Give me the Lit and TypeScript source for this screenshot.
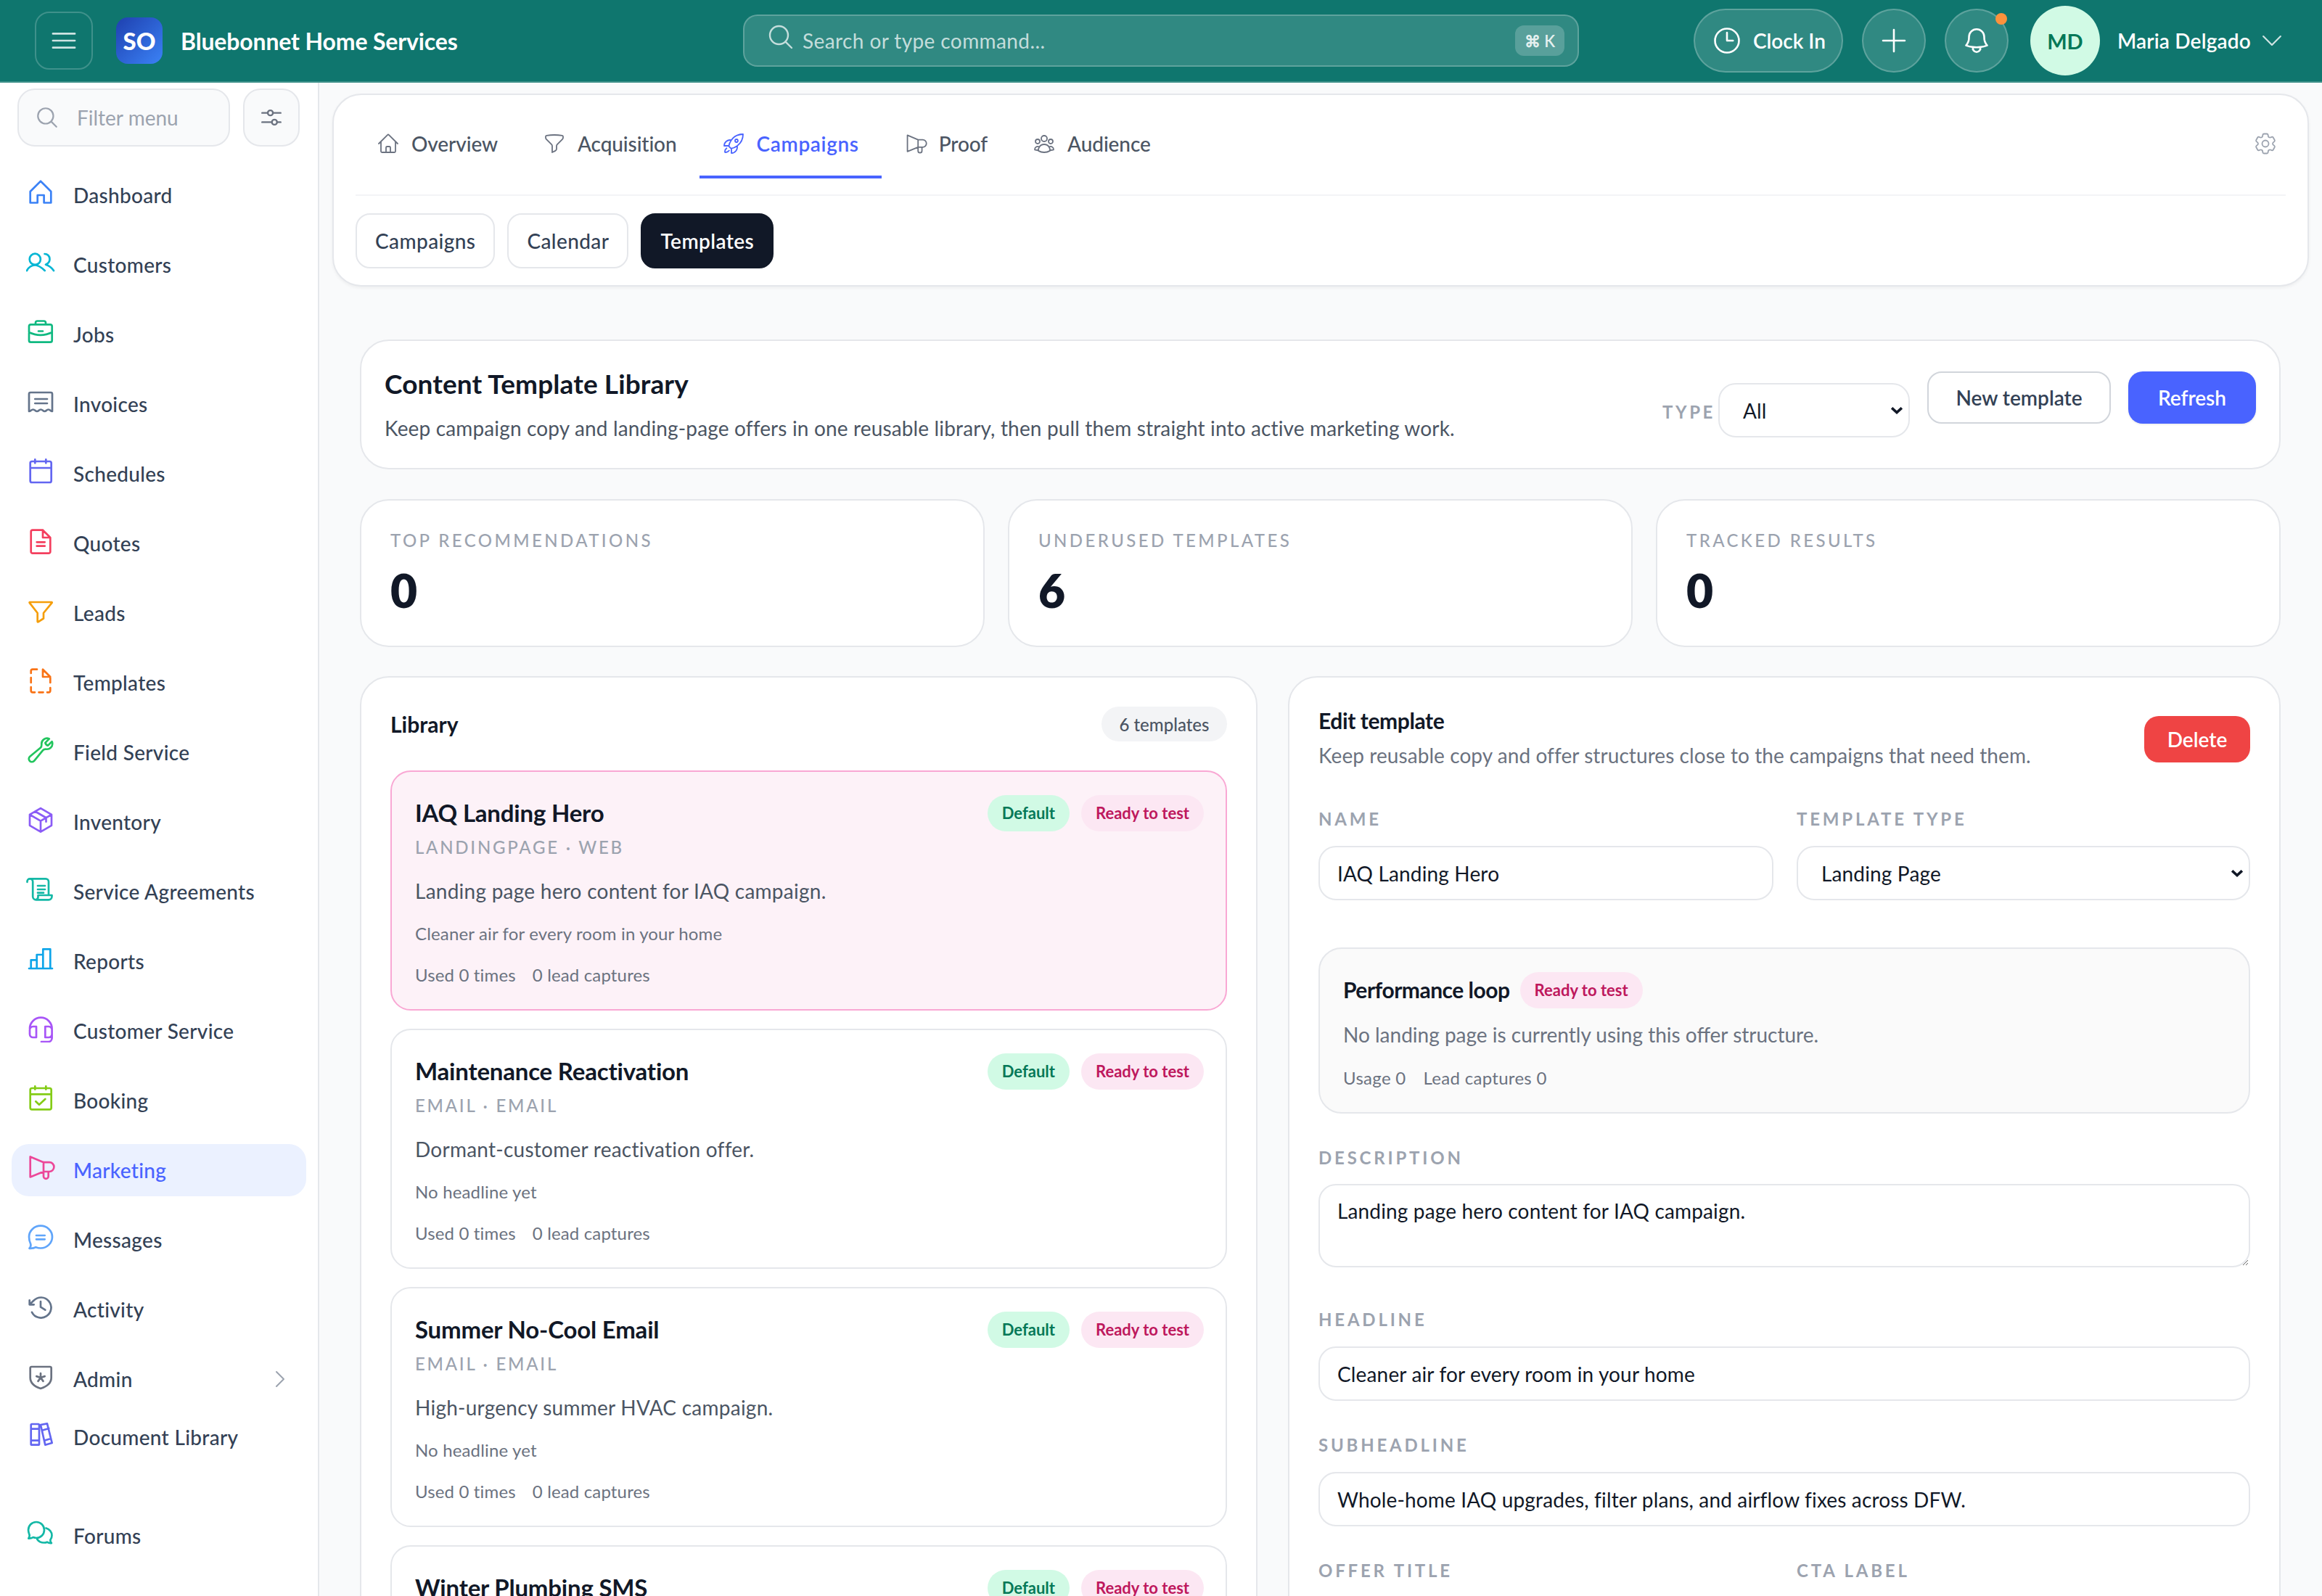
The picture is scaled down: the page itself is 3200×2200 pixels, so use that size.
import { LitElement, html, css } from 'lit';
import { customElement } from 'lit/decorators.js';

// heroicon-style paths, drawn on a 24 box
const H = {
  home: 'm2.25 12 8.954-8.955c.44-.439 1.152-.439 1.591 0L21.75 12M4.5 9.75v10.125c0 .621.504 1.125 1.125 1.125H9.75v-4.875c0-.621.504-1.125 1.125-1.125h2.25c.621 0 1.125.504 1.125 1.125V21h4.125c.621 0 1.125-.504 1.125-1.125V9.75M8.25 21h8.25',
  funnel: 'M12 3c2.755 0 5.455.232 8.083.678.533.09.917.556.917 1.096v1.044a2.25 2.25 0 0 1-.659 1.591l-5.432 5.432a2.25 2.25 0 0 0-.659 1.591v2.927a2.25 2.25 0 0 1-1.244 2.013L9.75 21v-6.568a2.25 2.25 0 0 0-.659-1.591L3.659 7.409A2.25 2.25 0 0 1 3 5.818V4.774c0-.54.384-1.006.917-1.096A48.32 48.32 0 0 1 12 3Z',
  wrench: 'M21.75 6.75a4.5 4.5 0 0 1-4.884 4.484c-1.076-.091-2.264.071-2.95.904l-7.152 8.684a2.548 2.548 0 1 1-3.586-3.586l8.684-7.152c.833-.686.995-1.874.904-2.95a4.5 4.5 0 0 1 6.336-4.486l-3.276 3.276a3.004 3.004 0 0 0 2.25 2.25l3.276-3.276c.258.58.398 1.217.398 1.852Z',
  cube: 'm21 7.5-9-5.25L3 7.5m18 0-9 5.25m9-5.25v9l-9 5.25M3 7.5l9 5.25M3 7.5v9l9 5.25m0-9v9M7.5 4.9l9 5.25v3.3',
  chevR: 'm8.25 4.5 7.5 7.5-7.5 7.5',
  chevD: 'm4.5 8.25 7.5 7.5 7.5-7.5',
  search: 'm21 21-5.197-5.197m0 0A7.5 7.5 0 1 0 5.196 5.196a7.5 7.5 0 0 0 10.607 10.607Z',
  sliders: 'M3 7.5h5.5M13.5 7.5H21M8.5 7.5a2.5 2.5 0 1 0 5 0 2.5 2.5 0 1 0-5 0ZM3 16.5h9.5M17.5 16.5H21M12.5 16.5a2.5 2.5 0 1 0 5 0 2.5 2.5 0 1 0-5 0Z',
  menu: 'M3.75 6.75h16.5M3.75 12h16.5m-16.5 5.25h16.5',
  clock: 'M12 6v6h4.5m4.5 0a9 9 0 1 1-18 0 9 9 0 0 1 18 0Z',
  plus: 'M12 4.5v15m7.5-7.5h-15',
  bell: 'M14.857 17.082a23.848 23.848 0 0 0 5.454-1.31A8.967 8.967 0 0 1 18 9.75V9A6 6 0 0 0 6 9v.75a8.967 8.967 0 0 1-2.312 6.022c1.733.64 3.56 1.085 5.455 1.31m5.714 0a24.255 24.255 0 0 1-5.714 0m5.714 0a3 3 0 1 1-5.714 0',
  rocket: 'M15.59 14.37a6 6 0 0 1-5.84 7.38v-4.8m5.84-2.58a14.98 14.98 0 0 0 6.16-12.12A14.98 14.98 0 0 0 9.631 8.41m5.96 5.96a14.926 14.926 0 0 1-5.841 2.58m-.119-8.54a6 6 0 0 0-7.381 5.84h4.8m2.581-5.84a14.927 14.927 0 0 0-2.58 5.84m2.699 2.7c-.103.021-.207.041-.311.06a15.09 15.09 0 0 1-2.448-2.448 14.9 14.9 0 0 1 .06-.312m-2.24 2.39a4.493 4.493 0 0 0-1.757 4.306 4.493 4.493 0 0 0 4.306-1.758M16.5 9a1.5 1.5 0 1 1-3 0 1.5 1.5 0 0 1 3 0Z',
  group: 'M18 18.72a9.094 9.094 0 0 0 3.741-.479 3 3 0 0 0-4.682-2.72m.94 3.198.001.031c0 .225-.012.447-.037.666A11.944 11.944 0 0 1 12 21c-2.17 0-4.207-.576-5.963-1.584A6.062 6.062 0 0 1 6 18.719m12 0a5.971 5.971 0 0 0-.941-3.197m0 0A5.995 5.995 0 0 0 12 12.75a5.995 5.995 0 0 0-5.058 2.772m0 0a3 3 0 0 0-4.681 2.72 8.986 8.986 0 0 0 3.74.477m.94-3.197a5.971 5.971 0 0 0-.94 3.197M15 6.75a3 3 0 1 1-6 0 3 3 0 0 1 6 0Zm6 3a2.25 2.25 0 1 1-4.5 0 2.25 2.25 0 0 1 4.5 0Zm-13.5 0a2.25 2.25 0 1 1-4.5 0 2.25 2.25 0 0 1 4.5 0Z',
  gear: 'M9.594 3.94c.09-.542.56-.94 1.11-.94h2.593c.55 0 1.02.398 1.11.94l.213 1.281c.063.374.313.686.645.87.074.04.147.083.22.127.325.196.72.257 1.075.124l1.217-.456a1.125 1.125 0 0 1 1.37.49l1.296 2.247a1.125 1.125 0 0 1-.26 1.431l-1.003.827c-.293.241-.438.613-.43.992a7.723 7.723 0 0 1 0 .255c-.008.378.137.75.43.991l1.004.827c.424.35.534.955.26 1.43l-1.298 2.247a1.125 1.125 0 0 1-1.369.491l-1.217-.456c-.355-.133-.75-.072-1.076.124a6.47 6.47 0 0 1-.22.128c-.331.183-.581.495-.644.869l-.213 1.281c-.09.543-.56.94-1.11.94h-2.594c-.55 0-1.019-.398-1.11-.94l-.213-1.281c-.062-.374-.312-.686-.644-.87a6.52 6.52 0 0 1-.22-.127c-.325-.196-.72-.257-1.076-.124l-1.217.456a1.125 1.125 0 0 1-1.369-.49l-1.297-2.247a1.125 1.125 0 0 1 .26-1.431l1.004-.827c.292-.24.437-.613.43-.991a6.932 6.932 0 0 1 0-.255c.007-.38-.138-.751-.43-.992l-1.004-.827a1.125 1.125 0 0 1-.26-1.43l1.297-2.247a1.125 1.125 0 0 1 1.37-.491l1.216.456c.356.133.751.072 1.076-.124.072-.044.146-.086.22-.128.332-.183.582-.495.644-.869l.214-1.28ZM15 12a3 3 0 1 1-6 0 3 3 0 0 1 6 0Z',
};

// sidebar icons, traced on a 40 box
const S = {
  home: 'M5.7 19 20 4.7 34.3 19V34.5H24.6V24H15.7V34.5H5.7Z',
  users: 'M4.7 16.3a7.6 7.6 0 1 0 15.2 0 7.6 7.6 0 1 0-15.2 0ZM1 32c2.5-4.5 6.5-7.5 11.3-7.5S21 27.5 25.7 32M25.5 9c4 0 7 3 7 7.2 0 3.3-2 6-5.5 7.5 4.5 1.5 8.5 4.5 11 8.3',
  briefcase: 'M6.5 10.3h26.7a2.5 2.5 0 0 1 2.5 2.5v19.4a2.5 2.5 0 0 1-2.5 2.5H6.5A2.5 2.5 0 0 1 4 32.2V12.8a2.5 2.5 0 0 1 2.5-2.5ZM4 21c5 2.5 10 3.8 15.8 3.8S30.7 23.5 35.7 21M13 10.3V8a2.5 2.5 0 0 1 2.5-2.5h9A2.5 2.5 0 0 1 27 8v2.3M17 19.5h6',
  receipt: 'M4 34V10a2 2 0 0 1 2-2h28a2 2 0 0 1 2 2v24c-2.6 0-2.6-2.5-5.3-2.5S28 34 25.6 34s-2.8-2.5-5.4-2.5S17.5 34 15 34s-2.7-2.5-5.4-2.5S6.6 34 4 34ZM12.3 17H29M12.3 23H29',
  calendar: 'M12.3 4.3v5M27.3 4.3v5M8 7h24.4a2.3 2.3 0 0 1 2.3 2.3v24.4a2.3 2.3 0 0 1-2.3 2.3H8a2.3 2.3 0 0 1-2.3-2.3V9.3A2.3 2.3 0 0 1 8 7ZM5.7 16h29',
  doc: 'M23 5.7H9a2.3 2.3 0 0 0-2.3 2.3v27.4A2.3 2.3 0 0 0 9 37.7h22a2.3 2.3 0 0 0 2.3-2.3V16ZM23 5.7V16h10.3M14.7 22.3h11M14.7 27.7h11',
  funnel: 'M5 9h30.3a.5.5 0 0 1 .3.8L24 24v7.5l-7.5 4.8a.6.6 0 0 1-.8-.5V24L4.7 9.8A.5.5 0 0 1 5 9Z',
  dashdoc: 'M15 5.7H9A2.3 2.3 0 0 0 6.7 8v3M6.7 17v7M6.7 30v5A2.3 2.3 0 0 0 9 37.3h3M17.5 37.3h6M29 37.3h2a2.3 2.3 0 0 0 2.3-2.3v-4M33.3 24v-7M23 5.7V16h10.3Z',
  scroll: 'M1.5 10a3.7 3.7 0 0 1 3.7-3.7H27a4 4 0 0 1 4 4V29M5.2 6.3a4 4 0 0 1 4 4V31a4.5 4.5 0 0 0 4.5 4.3H31a4.5 4.5 0 0 0 4.5-4.5V29H16.5v2a4.3 4.3 0 0 1-2.8 4.3M1.5 10v.8M16 16h10M16 21h10M16 25.7h8',
  chart: 'M4 34h32M6.7 34V22.3h8V34M14.7 22.3V15h8.6v19M23.3 15V7.3h10V34',
  headset: 'M5 21a15.3 15.3 0 0 1 30.6 0v13a5 5 0 0 1-5 5H21M5 22.5A4.5 4.5 0 0 1 9.5 18h4.5v15H9.5A4.5 4.5 0 0 1 5 28.5ZM35.6 22.5A4.5 4.5 0 0 0 31 18h-4.7v15H31a4.5 4.5 0 0 0 4.6-4.5',
  calcheck: 'M12.3 4.3v4.4M27.3 4.3v4.4M8 7h24.4a2.3 2.3 0 0 1 2.3 2.3v24.7a2.3 2.3 0 0 1-2.3 2.3H8A2.3 2.3 0 0 1 5.7 34V9.3A2.3 2.3 0 0 1 8 7ZM5.7 15.3h29M13.3 25.3l4.7 4.4 8.3-7.7',
  mega: 'M5.7 5.5v28L24 26h8a6.4 6.4 0 0 0 0-12.8h-8ZM24 13.2V26M24 26v6.5a3.3 3.3 0 0 0 6.7 0V26',
  chat: 'M20 4.7c8.9 0 16 6.9 16 15.3S28.9 35.5 20 35.5c-2.4 0-4.6-.5-6.6-1.3-2.2 1.4-5 1.8-8.9 1.6 1.6-1.6 2.2-3.6 1.8-5.8C4.9 27 4 23.7 4 20 4 11.6 11.1 4.7 20 4.7ZM14 18h11.7M14 23.3h11.7',
  history: 'M4.7 11.3v6h6M4.7 17.3 10.4 11.8A14 14 0 1 1 8 27.8M20 13v7.7l6.3 4',
  shield: 'M7.4 7h25.6a1.7 1.7 0 0 1 1.7 1.7V22c0 7-5.5 12-14.7 15C10.8 34 5.7 29 5.7 22V8.7A1.7 1.7 0 0 1 7.4 7ZM20 16v6m0 0 5.7-1.9M20 22l3.5 4.9M20 22l-3.5 4.9M20 22l-5.7-1.9',
  books: 'M8 6h8.7A1.3 1.3 0 0 1 18 7.3v26.1a1.3 1.3 0 0 1-1.3 1.3H8a1.3 1.3 0 0 1-1.3-1.3V7.3A1.3 1.3 0 0 1 8 6ZM6.7 12.7H18M6.7 28.7H18M20 7l9-1.7 6.7 26.7-9.4 2.7ZM22 14.7l9.3-2.7M25 28.7l9-2.7',
  forums: 'M14 5c6.2 0 11 5 11 11s-4.8 11-11 11c-1.6 0-3-.3-4.4-.9-2 1.2-4 1.7-6.3 1.5 1-1.3 1.5-2.8 1.4-4.4C3.9 21 3 18.6 3 16 3 10 7.8 5 14 5ZM27.5 13.5c4.5 1.3 8 5.3 8 10 0 2.4-.8 4.6-2.2 6.3 0 1.6.4 3.2 1.6 4.3-2.3.2-4.2-.2-6-1.4-1.3.6-2.7.8-4.2.8-4 0-7.5-1.7-9.5-4.8',
};

const icon = (d: string, size: number, px = 2.5, vb = '0 0 24 24', color = 'currentColor') => {
  const units = Number(vb.split(' ')[2]);
  return html`<svg
    class="ico"
    width=${size}
    height=${size}
    viewBox=${vb}
    fill="none"
    stroke=${color}
    stroke-width=${(px * units) / size}
    stroke-linecap="round"
    stroke-linejoin="round"
  ><path d=${d}></path></svg>`;
};

const V40 = '0 0 40 40';

const NAV = [
  { label: 'Dashboard', d: S.home, color: '#3b82f6' },
  { label: 'Customers', d: S.users, color: '#06b6d4' },
  { label: 'Jobs', d: S.briefcase, color: '#10b981' },
  { label: 'Invoices', d: S.receipt, color: '#64748b' },
  { label: 'Schedules', d: S.calendar, color: '#6366f1' },
  { label: 'Quotes', d: S.doc, color: '#f43f5e' },
  { label: 'Leads', d: S.funnel, color: '#f59e0b' },
  { label: 'Templates', d: S.dashdoc, color: '#f97316' },
  { label: 'Field Service', d: H.wrench, color: '#22c55e', vb: '0 -0.6 24 24' },
  { label: 'Inventory', d: H.cube, color: '#8b5cf6', vb: '0 -0.8 24 24' },
  { label: 'Service Agreements', d: S.scroll, color: '#14b8a6' },
  { label: 'Reports', d: S.chart, color: '#0ea5e9' },
  { label: 'Customer Service', d: S.headset, color: '#a855f7' },
  { label: 'Booking', d: S.calcheck, color: '#84cc16' },
  { label: 'Marketing', d: S.mega, color: '#ec4899', active: true },
  { label: 'Messages', d: S.chat, color: '#60a5fa' },
  { label: 'Activity', d: S.history, color: '#64748b' },
  { label: 'Admin', d: S.shield, color: '#6b7280', more: true },
  { label: 'Document Library', d: S.books, color: '#6366f1', cls: 'tight' },
  { label: 'Forums', d: S.forums, color: '#14b8a6', cls: 'apart' },
];

const TABS = [
  { label: 'Overview', d: H.home, vb: '0 0 24 24' },
  { label: 'Acquisition', d: H.funnel, vb: '0 0 24 24' },
  { label: 'Campaigns', d: H.rocket, vb: '0 0 24 24', active: true },
  { label: 'Proof', d: S.mega, vb: V40 },
  { label: 'Audience', d: H.group, vb: '0 0 24 24' },
];

const TEMPLATES = [
  { name: 'IAQ Landing Hero', kind: 'LANDINGPAGE · WEB', desc: 'Landing page hero content for IAQ campaign.', head: 'Cleaner air for every room in your home', active: true },
  { name: 'Maintenance Reactivation', kind: 'EMAIL · EMAIL', desc: 'Dormant-customer reactivation offer.', head: 'No headline yet' },
  { name: 'Summer No-Cool Email', kind: 'EMAIL · EMAIL', desc: 'High-urgency summer HVAC campaign.', head: 'No headline yet' },
  { name: 'Winter Plumbing SMS', kind: 'SMS · SMS', desc: 'Winter plumbing reminder.', head: 'No headline yet' },
];

@customElement('app-root')
export class AppRoot extends LitElement {
  static styles = css`
    :host {
      display: block;
      height: 2200px;
      overflow: hidden;
      background: #f9fafb;
      color: #111827;
      font-family: 'Lato', 'Noto Sans', sans-serif;
      -webkit-font-smoothing: antialiased;
    }
    * { box-sizing: border-box; }
    .ico { flex: none; display: block; }

    .top {
      display: flex;
      align-items: center;
      height: 114px;
      background: #0f766e;
      border-bottom: 2px solid #3f918a;
      color: #fff;
    }
    .brand { display: flex; align-items: center; width: 1024px; padding-left: 48px; flex: none; }
    .menu {
      width: 80px; height: 80px;
      display: flex; align-items: center; justify-content: center;
      border: 2px solid rgba(255,255,255,.2);
      border-radius: 20px;
      margin-right: 32px;
      color: rgba(255,255,255,.8);
    }
    .logo {
      width: 64px; height: 64px;
      border-radius: 16px;
      display: flex; align-items: center; justify-content: center;
      background: linear-gradient(135deg, #1e40af, #3b82f6);
      font-size: 33px; font-weight: 900;
      margin-right: 25px;
    }
    .brand-name { font-size: 32px; font-weight: 700; white-space: nowrap; letter-spacing: -.15px; }
    .search {
      width: 1152px; height: 72px; flex: none;
      display: flex; align-items: center;
      padding: 0 18px 0 30px;
      background: rgba(255,255,255,.14);
      border: 2px solid rgba(255,255,255,.22);
      border-radius: 20px;
      color: rgba(255,255,255,.72);
      font-size: 28px;
      letter-spacing: .4px;
    }
    .search .ico { margin-bottom: 10px; }
    .search span { margin-left: 10px; flex: 1; }
    .search kbd {
      font: inherit;
      font-size: 22px;
      font-weight: 600;
      color: rgba(255,255,255,.85);
      background: rgba(255,255,255,.2);
      border-radius: 12px;
      height: 42px; width: 68px;
      display: flex; align-items: center; justify-content: center;
      letter-spacing: 0;
    }
    .actions { margin-left: auto; display: flex; align-items: center; padding-right: 50px; }
    .round {
      height: 88px; width: 88px;
      display: flex; align-items: center; justify-content: center; gap: 14px;
      border-radius: 44px;
      background: rgba(255,255,255,.14);
      border: 2px solid rgba(255,255,255,.22);
      margin-right: 26px;
      position: relative;
      font-size: 28px; font-weight: 600;
    }
    .clock { width: 206px; }
    .bell { margin-right: 30px; }
    .dot {
      position: absolute; top: 4px; right: 0;
      width: 16px; height: 16px; border-radius: 50%;
      background: #fb923c;
    }
    .avatar {
      width: 96px; height: 96px; border-radius: 50%;
      background: #d1fae5; color: #047857;
      display: flex; align-items: center; justify-content: center;
      font-size: 29px; font-weight: 700;
      margin-right: 24px;
    }
    .user { font-size: 28px; font-weight: 600; margin-right: 10px; white-space: nowrap; letter-spacing: .2px; }

    .body { display: flex; height: 2086px; }
    .side {
      width: 440px; flex: none;
      background: #fff;
      border-right: 2px solid #e5e7eb;
      padding: 8px 0 0;
    }
    .filter-row { display: flex; gap: 18px; padding: 0 25px 0 24px; margin-bottom: 31px; }
    .filter {
      flex: 1; height: 80px;
      display: flex; align-items: center; gap: 24px;
      padding-left: 22px;
      background: #f9fafb;
      border: 2px solid #e5e7eb;
      border-radius: 24px;
      color: #9ca3af;
      font-size: 28px;
    }
    .filter-btn {
      width: 78px; height: 80px; flex: none;
      display: flex; align-items: center; justify-content: center;
      background: #f9fafb;
      border: 2px solid #e5e7eb;
      border-radius: 24px;
      color: #6b7280;
    }
    .nav { display: flex; flex-direction: column; gap: 24px; padding: 0 16px; }
    .item {
      height: 72px;
      display: flex; align-items: center; gap: 25px;
      padding: 0 20px;
      border-radius: 24px;
      font-size: 28px; font-weight: 500;
      color: #334155;
      letter-spacing: .3px;
    }
    .item > .ico { margin-bottom: 8px; }
    .item.active { background: #ebf1ff; color: #4963ff; }
    .item.tight { margin-top: -16px; }
    .item.apart { margin-top: 40px; }
    .item .more { margin-left: auto; color: #9ca3af; }

    .main { flex: 1; min-width: 0; padding: 15px 18px 0; }
    .nav-card {
      height: 266px;
      background: #fff;
      border: 2px solid #e5e7eb;
      border-radius: 40px;
      box-shadow: 0 2px 4px rgba(0,0,0,.05);
      padding: 19px 30px 0;
    }
    .tabs {
      display: flex; align-items: stretch;
      height: 120px;
      padding-bottom: 22px;
      border-bottom: 2px solid #f3f4f6;
    }
    .tab {
      display: flex; align-items: center; gap: 16px;
      padding: 4px 31px 0;
      font-size: 28px; font-weight: 500;
      color: #4b5563;
      letter-spacing: -.1px;
      border-bottom: 4px solid transparent;
    }
    .tab:first-child { margin-left: -1px; padding-left: 30px; }
    .tab .ico { color: #6b7280; }
    .tab.active { color: #4963ff; border-bottom-color: #4963ff; font-weight: 600; letter-spacing: .65px; }
    .tab.active .ico { color: #4963ff; }
    .gear { margin-left: auto; align-self: center; color: #9ca3af; margin-right: 10px; }
    .subtabs { display: flex; gap: 17px; margin-top: 24px; }
    .subtab {
      height: 76px;
      display: flex; align-items: center;
      padding: 0 25px;
      background: #fff;
      border: 2px solid #e5e7eb;
      border-radius: 20px;
      font-size: 28px; font-weight: 500;
      color: #334155;
      letter-spacing: .4px;
    }
    .subtab.on { background: #111827; border-color: #111827; color: #fff; font-weight: 600; }

    .content { padding: 73px 21px 0 20px; margin: 0 18px 0 18px; }
    .card {
      background: #fff;
      border: 2px solid #e5e7eb;
      border-radius: 40px;
    }
    .lib-head {
      height: 179px;
      display: flex;
      padding: 42px 32px;
      margin-bottom: 41px;
    }
    .lib-text { flex: 1; }
    .lib-title { font-size: 37px; font-weight: 700; line-height: 34px; letter-spacing: .1px; }
    .lib-desc { font-size: 28px; line-height: 36px; margin-top: 26px; color: #4b5563; letter-spacing: .15px; }
    .type-label {
      margin-top: 40px;
      font-size: 24px; font-weight: 700; line-height: 32px;
      color: #9ca3af; letter-spacing: 3.6px;
      margin-right: 4px;
    }
    select, input, textarea {
      font: inherit;
      font-size: 28px;
      color: #111827;
      background: #fff;
      border: 2px solid #e5e7eb;
      border-radius: 24px;
      outline: none;
      letter-spacing: .15px;
    }
    select { appearance: none; -webkit-appearance: none; width: 100%; height: 75px; padding: 0 32px; display: block; }
    .sel { position: relative; display: block; }
    .sel .arrow {
      position: absolute; right: 10px; top: 50%;
      width: 16px; height: 10px; margin-top: -5px;
      pointer-events: none;
    }
    .type-sel { width: 264px; margin: 16px 24px 0 0; flex: none; height: 75px; }
    .btn {
      height: 72px;
      display: flex; align-items: center; justify-content: center;
      border-radius: 20px;
      font-size: 28px; font-weight: 600;
    }
    .btn.ghost { width: 253px; border: 2px solid #d1d5db; color: #334155; margin-right: 24px; background: #fff; }
    .btn.primary { width: 176px; background: #4963ff; color: #fff; box-shadow: 0 1px 3px rgba(0,0,0,.1); }

    .stats { display: grid; grid-template-columns: repeat(3, 1fr); gap: 32px; margin-bottom: 40px; }
    .stat { height: 204px; padding: 39px 40px 0; }
    .stat-label { font-size: 24px; line-height: 32px; color: #9ca3af; letter-spacing: 3.4px; font-weight: 500; }
    .stat-value { font-size: 64px; line-height: 72px; font-weight: 800; margin-top: 17px; }

    .cols { display: grid; grid-template-columns: 1237px 1fr; gap: 42px; align-items: start; }
    .library { padding: 40px 40px 0; height: 1400px; }
    .library-head { display: flex; align-items: center; justify-content: space-between; height: 48px; margin-bottom: 40px; }
    .h3 { font-size: 30px; font-weight: 700; }
    .count {
      height: 48px; width: 173px;
      display: flex; align-items: center; justify-content: center;
      background: #f3f4f6; color: #4b5563;
      border-radius: 24px;
      font-size: 24px; font-weight: 500;
    }
    .tlist { display: flex; flex-direction: column; gap: 25px; }
    .tcard {
      height: 331px;
      padding: 32px 30px 0 32px;
      border: 2px solid #e5e7eb;
      border-radius: 28px;
      background: #fff;
    }
    .tcard.active { background: #fdf2f8; border-color: #f9a8d4; }
    .tcard-top { display: flex; align-items: center; height: 50px; gap: 16px; }
    .tname { font-size: 33px; font-weight: 700; margin-right: auto; color: #111827; letter-spacing: -.2px; padding-bottom: 2px; }
    .badge {
      height: 50px;
      display: flex; align-items: center;
      padding: 0 20px 2px;
      border-radius: 25px;
      font-size: 22px; font-weight: 700;
    }
    .badge.green { background: #d1fae5; color: #047857; }
    .badge.pink { background: #fce7f3; color: #be185d; }
    .kind { font-size: 24px; line-height: 32px; margin-top: 6px; color: #9ca3af; letter-spacing: 2.75px; font-weight: 500; }
    .tdesc { font-size: 28px; line-height: 40px; margin-top: 24px; color: #4b5563; letter-spacing: .25px; }
    .thead { font-size: 24px; line-height: 32px; margin-top: 23px; color: #6b7280; letter-spacing: .15px; }
    .tmeta { display: flex; gap: 23px; font-size: 24px; line-height: 32px; margin-top: 25px; color: #6b7280; letter-spacing: .15px; }

    .edit { padding: 39px 40px 0; height: 1400px; }
    .edit-head { display: flex; align-items: center; justify-content: space-between; }
    .edit-text { padding-bottom: 4px; }
    .edit-title { font-size: 30px; font-weight: 700; line-height: 40px; letter-spacing: -.4px; }
    .edit-sub { font-size: 28px; line-height: 40px; margin-top: 8px; color: #6b7280; letter-spacing: .07px; }
    .btn.danger { width: 146px; height: 64px; background: #ef4444; color: #fff; }
    .grid2 { display: grid; grid-template-columns: 627px 1fr; gap: 32px; }
    .label { font-size: 24px; line-height: 32px; font-weight: 700; color: #9ca3af; letter-spacing: 3.8px; display: block; }
    .field input, .field .sel, .field textarea { display: block; width: 100%; height: 75px; margin-top: 21px; }
    .field input { padding: 0 24px; }
    .field textarea { height: 115px; padding: 18px 24px; resize: vertical; margin-top: 20px; }
    .perf {
      height: 229px;
      margin-top: 65px;
      padding: 32px 32px 0;
      background: #fafafa;
      border: 2px solid #e5e7eb;
      border-radius: 32px;
    }
    .perf-top { display: flex; align-items: center; gap: 14px; height: 50px; }
    .perf-title { font-size: 30px; font-weight: 700; letter-spacing: -.5px; padding-bottom: 3px; }
    .perf-text { font-size: 28px; line-height: 40px; margin-top: 16px; color: #6b7280; }
    .perf-meta { display: flex; gap: 24px; font-size: 24px; line-height: 32px; margin-top: 24px; color: #6b7280; letter-spacing: .3px; }
    .m48 { margin-top: 48px; }
    .m45 { margin-top: 45px; }
    .m56 { margin-top: 56px; }
  `;

  private arrow() {
    return html`<svg class="arrow" viewBox="0 0 16 10" fill="none" stroke="#111827" stroke-width="3.6" stroke-linecap="square"><path d="M2.5 2.5 8 7.5l5.5-5"></path></svg>`;
  }

  private field(label: string, value: string, cls = 'm45') {
    return html`<div class="field ${cls}">
      <label class="label">${label}</label>
      <input .value=${value} />
    </div>`;
  }

  private header() {
    return html`<header class="top">
      <div class="brand">
        <div class="menu">${icon(H.menu, 44, 2.6)}</div>
        <div class="logo">SO</div>
        <div class="brand-name">Bluebonnet Home Services</div>
      </div>
      <div class="search">
        ${icon(H.search, 40, 2.4)}
        <span>Search or type command...</span>
        <kbd>⌘ K</kbd>
      </div>
      <div class="actions">
        <div class="round clock">${icon(H.clock, 44, 2.6)}Clock In</div>
        <div class="round">${icon(H.plus, 48, 2.6)}</div>
        <div class="round bell">${icon(H.bell, 42, 2.6)}<i class="dot"></i></div>
        <div class="avatar">MD</div>
        <div class="user">Maria Delgado</div>
        ${icon(H.chevD, 38, 2.2, '0 0 24 24', 'rgba(255,255,255,.8)')}
      </div>
    </header>`;
  }

  private sidebar() {
    return html`<aside class="side">
      <div class="filter-row">
        <div class="filter">${icon(H.search, 34, 2.2, '0 0 24 24', '#9ca3af')}Filter menu</div>
        <div class="filter-btn">${icon(H.sliders, 34, 2.4)}</div>
      </div>
      <nav class="nav">
        ${NAV.map(
          (n) => html`<div class="item ${n.active ? 'active' : ''} ${n.cls ?? ''}">
            ${icon(n.d, 40, 2.7, n.vb ?? V40, n.color)}
            <span>${n.label}</span>
            ${n.more ? html`<span class="more">${icon(H.chevR, 32, 2)}</span>` : ''}
          </div>`
        )}
      </nav>
    </aside>`;
  }

  private templateCard(t: (typeof TEMPLATES)[number]) {
    return html`<div class="tcard ${t.active ? 'active' : ''}">
      <div class="tcard-top">
        <div class="tname">${t.name}</div>
        <span class="badge green">Default</span>
        <span class="badge pink">Ready to test</span>
      </div>
      <div class="kind">${t.kind}</div>
      <div class="tdesc">${t.desc}</div>
      <div class="thead">${t.head}</div>
      <div class="tmeta"><span>Used 0 times</span><span>0 lead captures</span></div>
    </div>`;
  }

  render() {
    return html`
      ${this.header()}
      <div class="body">
        ${this.sidebar()}
        <main class="main">
          <div class="nav-card">
            <div class="tabs">
              ${TABS.map(
                (t) => html`<div class="tab ${t.active ? 'active' : ''}">
                  ${icon(t.d, 32, 1.8, t.vb)}${t.label}
                </div>`
              )}
              <div class="gear">${icon(H.gear, 36, 1.8)}</div>
            </div>
            <div class="subtabs">
              <div class="subtab">Campaigns</div>
              <div class="subtab">Calendar</div>
              <div class="subtab on">Templates</div>
            </div>
          </div>
          <div class="content">
            <section class="card lib-head">
              <div class="lib-text">
                <div class="lib-title">Content Template Library</div>
                <div class="lib-desc">Keep campaign copy and landing-page offers in one reusable library, then pull them straight into active marketing work.</div>
              </div>
              <span class="type-label">TYPE</span>
              <span class="sel type-sel"><select><option>All</option></select>${this.arrow()}</span>
              <div class="btn ghost">New template</div>
              <div class="btn primary">Refresh</div>
            </section>
            <section class="stats">
              <div class="card stat"><div class="stat-label">TOP RECOMMENDATIONS</div><div class="stat-value">0</div></div>
              <div class="card stat"><div class="stat-label">UNDERUSED TEMPLATES</div><div class="stat-value">6</div></div>
              <div class="card stat"><div class="stat-label">TRACKED RESULTS</div><div class="stat-value">0</div></div>
            </section>
            <section class="cols">
              <div class="card library">
                <div class="library-head">
                  <div class="h3">Library</div>
                  <div class="count">6 templates</div>
                </div>
                <div class="tlist">${TEMPLATES.map((t) => this.templateCard(t))}</div>
              </div>
              <div class="card edit">
                <div class="edit-head">
                  <div class="edit-text">
                    <div class="edit-title">Edit template</div>
                    <div class="edit-sub">Keep reusable copy and offer structures close to the campaigns that need them.</div>
                  </div>
                  <div class="btn danger">Delete</div>
                </div>
                <div class="grid2 m48">
                  <div class="field"><label class="label">NAME</label><input .value=${'IAQ Landing Hero'} /></div>
                  <div class="field">
                    <label class="label">TEMPLATE TYPE</label>
                    <span class="sel"><select><option>Landing Page</option></select>${this.arrow()}</span>
                  </div>
                </div>
                <div class="perf">
                  <div class="perf-top">
                    <div class="perf-title">Performance loop</div>
                    <span class="badge pink">Ready to test</span>
                  </div>
                  <div class="perf-text">No landing page is currently using this offer structure.</div>
                  <div class="perf-meta"><span>Usage 0</span><span>Lead captures 0</span></div>
                </div>
                <div class="field m45">
                  <label class="label">DESCRIPTION</label>
                  <textarea .value=${'Landing page hero content for IAQ campaign.'}></textarea>
                </div>
                ${this.field('HEADLINE', 'Cleaner air for every room in your home', 'm56')}
                ${this.field('SUBHEADLINE', 'Whole-home IAQ upgrades, filter plans, and airflow fixes across DFW.')}
                <div class="grid2 m45">
                  <div class="field"><label class="label">OFFER TITLE</label><input /></div>
                  <div class="field"><label class="label">CTA LABEL</label><input /></div>
                </div>
              </div>
            </section>
          </div>
        </main>
      </div>
    `;
  }
}
